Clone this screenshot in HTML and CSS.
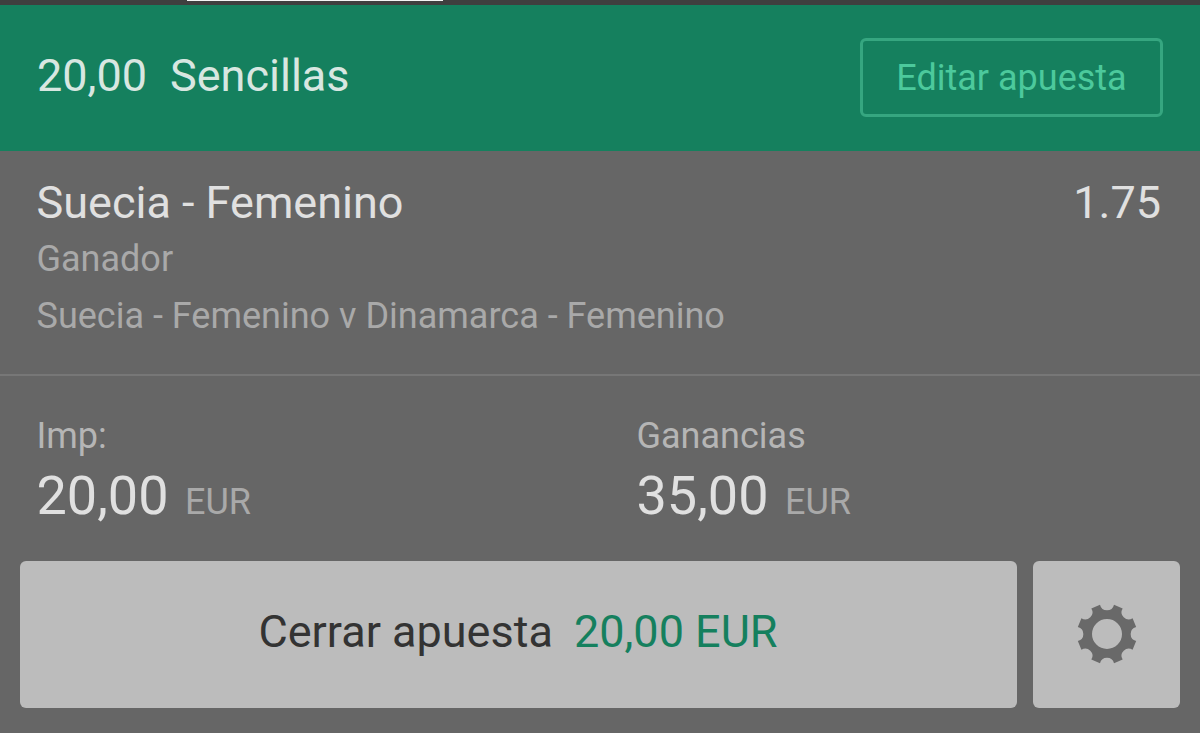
FILE: index.html
```html
<!DOCTYPE html>
<html lang="es">
<head>
    <meta charset="UTF-8">
    <meta name="viewport" content="width=device-width, initial-scale=1.0">
    <title>Cerrar apuesta</title>
    <link rel="stylesheet" href="styles.css">
</head>
<body>
    <div class="status-bar"><div class="status-tab"></div></div>

    <header class="bet-header">
        <div class="bet-title"><span>20,00</span><span>Sencillas</span></div>
        <button class="edit-button">Editar apuesta</button>
    </header>

    <section class="selection">
        <div class="selection-top">
            <div class="selection-name">Suecia - Femenino</div>
            <div class="selection-odds">1.75</div>
        </div>
        <div class="selection-market">Ganador</div>
        <div class="selection-event">Suecia - Femenino v Dinamarca - Femenino</div>
    </section>

    <section class="amounts">
        <div class="amount">
            <div class="amount-label">Imp:</div>
            <div class="amount-value">20,00 <span class="currency">EUR</span></div>
        </div>
        <div class="amount">
            <div class="amount-label">Ganancias</div>
            <div class="amount-value">35,00 <span class="currency">EUR</span></div>
        </div>
    </section>

    <div class="actions">
        <button class="cashout-button"><span>Cerrar apuesta</span><span class="cashout-sum">20,00 EUR</span></button>
        <button class="settings-button" aria-label="Ajustes">
            <svg class="gear" viewBox="0 0 64 64">
                <path fill-rule="evenodd" d="M61.17 39 L57.58 47.67 A7.2 7.2 0 0 0 47.67 57.58 L39 61.17 A7.2 7.2 0 0 0 25 61.17 L16.33 57.58 A7.2 7.2 0 0 0 6.42 47.67 L2.83 39 A7.2 7.2 0 0 0 2.83 25 L6.42 16.33 A7.2 7.2 0 0 0 16.33 6.42 L25 2.83 A7.2 7.2 0 0 0 39 2.83 L47.67 6.42 A7.2 7.2 0 0 0 57.58 16.33 L61.17 25 A7.2 7.2 0 0 0 61.17 39 Z M32 17 A15 15 0 1 0 32 47 A15 15 0 1 0 32 17 Z"/>
            </svg>
        </button>
    </div>
</body>
</html>
```

FILE: styles.css
```css
html, body {
    height: 100%;
}
body {
    margin: 0;
    background: #666666;
    font-family: Roboto, "Liberation Sans", sans-serif;
    overflow: hidden;
}
button {
    font-family: inherit;
    padding: 0;
    cursor: pointer;
}
.status-bar {
    height: 5px;
    background: #3f3f3f;
    padding-left: 187px;
}
.status-tab {
    width: 256px;
    height: 1px;
    background: #f4f4f4;
}
.bet-header {
    height: 146px;
    box-sizing: border-box;
    background: #15805e;
    padding: 33px 37px 0 37px;
    display: flex;
    justify-content: space-between;
    align-items: flex-start;
}
.bet-title {
    display: flex;
    gap: 23px;
    font-size: 45px;
    line-height: 76px;
    color: #d8e7e1;
}
.edit-button {
    width: 303px;
    height: 79px;
    background: transparent;
    border: 3px solid #36a680;
    border-radius: 6px;
    color: #4cc99c;
    font-size: 36px;
}
.selection {
    height: 225px;
    box-sizing: border-box;
    padding: 24px 39px 0 36.5px;
    border-bottom: 2px solid #777777;
}
.selection-top {
    display: flex;
    justify-content: space-between;
    font-size: 45px;
    line-height: 56px;
    color: #e0e0e0;
}
.selection-market,
.selection-event {
    font-size: 36px;
    line-height: 56px;
    color: #a9a9a9;
}
.selection-event {
    padding-top: 1px;
}
.amounts {
    display: grid;
    grid-template-columns: 600px 1fr;
    padding: 33px 37px 0 36.5px;
    height: 185px;
    box-sizing: border-box;
}
.amount-label {
    font-size: 36px;
    line-height: 54px;
    color: #b5b5b5;
}
.amount-value {
    font-size: 54px;
    line-height: 66px;
    color: #e0e0e0;
}
.currency {
    font-size: 36px;
    color: #a9a9a9;
    margin-left: 3px;
}
.actions {
    display: flex;
    gap: 16px;
    padding: 0 20px;
}
.cashout-button,
.settings-button {
    height: 147px;
    border: none;
    border-radius: 6px;
    background: #bcbcbc;
    display: flex;
    align-items: center;
    justify-content: center;
}
.cashout-button {
    width: 997px;
    gap: 21px;
    padding: 0 1px 6px 0;
    font-size: 45px;
    color: #333333;
}
.cashout-sum {
    color: #15805e;
}
.settings-button {
    width: 147px;
    padding-bottom: 2px;
}
.gear {
    width: 64px;
    height: 64px;
    fill: #696969;
}
```
